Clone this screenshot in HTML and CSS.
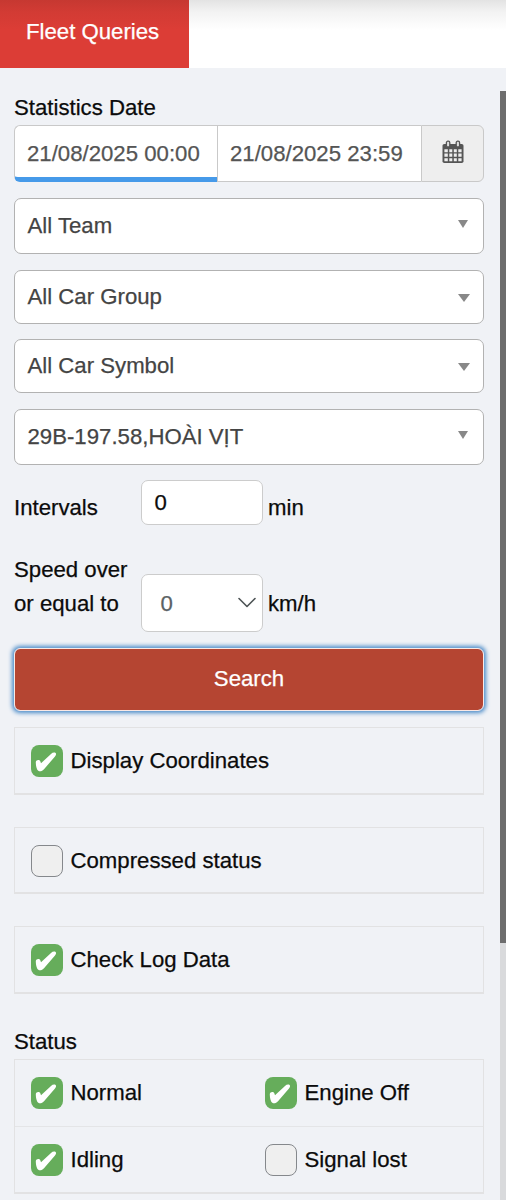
FILE: index.html
```
<!DOCTYPE html>
<html lang="en">
<head>
    <title>Fleet Queries</title>
    <meta charset="utf-8">
    <link rel="stylesheet" href="styles.css">
</head>
<body>

    <!-- Shared icons -->
    <svg class="icon-defs" width="0" height="0">
        <symbol id="check" viewBox="0 0 32 32">
            <path d="M4.8 17C5 14.6 8.6 14.2 9.3 16.3L10 18.3L20 9C21.5 7.6 23.5 7.2 24.6 8.1C25.5 9 25 10.3 24 11.5L13.2 24C10.8 26.8 7.5 27.2 6.2 24.6C5.2 22.4 4.8 19.5 4.8 17Z" />
        </symbol>
    </svg>

    <header class="tabs">
        <div class="tab">Fleet Queries</div>
    </header>

    <div class="panel">
        <main class="form">
            <div class="label">Statistics Date</div>
            <div class="dates">
                <div class="date active">21/08/2025 00:00</div>
                <div class="date">21/08/2025 23:59</div>
                <div class="date-icon">
                    <svg width="22" height="24" viewBox="0 0 22 24">
                        <rect x="0.5" y="4" width="21" height="19" rx="1.8" fill="#555" />
                        <path d="M2.4 9.2h3.4v3.1H2.4zM7.3 9.2h3v3.1h-3zM11.8 9.2h3v3.1h-3zM16.3 9.2h3.3v3.1h-3.3zM2.4 13.6h3.4v3.2H2.4zM7.3 13.6h3v3.2h-3zM11.8 13.6h3v3.2h-3zM16.3 13.6h3.3v3.2h-3.3zM2.4 18.2h3.4v3H2.4zM7.3 18.2h3v3h-3zM11.8 18.2h3v3h-3zM16.3 18.2h3.3v3h-3.3z" fill="#eee" />
                        <rect x="4.4" y="1.2" width="3.4" height="5.8" rx="1.5" fill="#ddd" stroke="#555" stroke-width="1.3" />
                        <rect x="14.2" y="1.2" width="3.4" height="5.8" rx="1.5" fill="#ddd" stroke="#555" stroke-width="1.3" />
                    </svg>
                </div>
            </div>

            <div class="select tall">
                All Team
                <svg class="arrow" width="10" height="8"><path d="M0 0h10L5 8z" /></svg>
            </div>
            <div class="select">
                All Car Group
                <svg class="arrow wide" width="12" height="8"><path d="M0 0h12L6 8z" /></svg>
            </div>
            <div class="select">
                All Car Symbol
                <svg class="arrow wide" width="12" height="8"><path d="M0 0h12L6 8z" /></svg>
            </div>
            <div class="select tall">
                29B-197.58,HOÀI VỊT
                <svg class="arrow" width="10" height="8"><path d="M0 0h10L5 8z" /></svg>
            </div>

            <div class="row intervals">
                <div class="row-label">Intervals</div>
                <div class="input">0</div>
                <div class="unit">min</div>
            </div>
            <div class="row speed">
                <div class="row-label">Speed over<br>or equal to</div>
                <div class="input dropdown">
                    0
                    <svg width="18" height="12" viewBox="0 0 18 12"><path d="M1 1.5l8 8 8-8" fill="none" stroke="#4c5254" stroke-width="1.6" stroke-linecap="round" stroke-linejoin="round" /></svg>
                </div>
                <div class="unit">km/h</div>
            </div>

            <button class="search">Search</button>

            <div class="box">
                <label class="option"><span class="checkbox checked"><svg><use href="#check" /></svg></span>Display Coordinates</label>
            </div>
            <div class="box">
                <label class="option"><span class="checkbox"></span>Compressed status</label>
            </div>
            <div class="box">
                <label class="option"><span class="checkbox checked"><svg><use href="#check" /></svg></span>Check Log Data</label>
            </div>

            <div class="label status-label">Status</div>
            <div class="status">
                <label class="option"><span class="checkbox checked"><svg><use href="#check" /></svg></span>Normal</label>
                <label class="option"><span class="checkbox checked"><svg><use href="#check" /></svg></span>Engine Off</label>
                <label class="option"><span class="checkbox checked"><svg><use href="#check" /></svg></span>Idling</label>
                <label class="option"><span class="checkbox"></span>Signal lost</label>
            </div>
        </main>
        <div class="scrollbar">
            <div class="thumb"></div>
        </div>
    </div>

</body>
</html>
```

FILE: styles.css
```
* {
    box-sizing: border-box;
}
body {
    margin: 0;
    height: 1200px;
    overflow: hidden;
    background: #f0f2f6;
    color: #0b0b0b;
    font-family: "Liberation Sans", Arial, sans-serif;
    font-size: 22.2px;
    line-height: 26px;
    -webkit-text-stroke: 0.25px;
}
.icon-defs {
    display: block;
}

/* Top tabs */
.tabs {
    display: flex;
    height: 67.5px;
    background: linear-gradient(#e3e3e3, #f3f3f3 12px, #fff 30px);
}
.tab {
    width: 188.5px;
    padding: 19px 0 0 26px;
    background: linear-gradient(#c63831, #d23b34 12px, #dc3d36 30px);
    color: #fff;
}

/* Panel and scrollbar */
.panel {
    display: flex;
    height: 1132.5px;
}
.form {
    width: 500px;
    padding: 27px 16px 0 14px;
}
.scrollbar {
    width: 6px;
    margin-top: 23.5px;
    background: #d9dadc;
}
.thumb {
    height: 852px;
    background: #6d6d6d;
}
.label {
    height: 30.5px;
}

/* Date range */
.dates {
    display: flex;
    width: 470px;
    height: 57px;
    margin-bottom: 16px;
}
.date {
    width: 204px;
    padding: 15px 0 0 13px;
    border: 1px solid #c9c9c9;
    border-width: 1px 0;
    background: #fff;
    color: #555;
}
.date.active {
    width: 203px;
    padding-left: 12px;
    border-left-width: 1px;
    border-bottom: 5px solid #469ae9;
    border-radius: 6px 0 0 6px;
}
.date + .date {
    padding-left: 12px;
    border-left-width: 1px;
}
.date-icon {
    flex: 1;
    padding: 14px 0 0 20px;
    border: 1px solid #c9c9c9;
    border-radius: 0 6px 6px 0;
    background: #eee;
}

/* Select boxes */
.select {
    display: flex;
    justify-content: space-between;
    width: 470px;
    height: 54px;
    margin-bottom: 15.5px;
    padding: 13px 13px 0 12.5px;
    border: 1px solid #b2b2b2;
    border-radius: 7px;
    background: #fff;
    color: #444;
}
.select.tall {
    height: 56px;
    padding: 14px 15px 0 12.5px;
}
.arrow {
    margin-top: 7px;
    fill: #888;
}
.arrow.wide {
    margin-top: 10px;
}

/* Small inputs */
.row {
    display: flex;
}
.row-label {
    width: 127px;
}
.input {
    width: 122px;
    height: 45px;
    padding: 9px 12.5px;
    border: 1px solid #ccc;
    border-radius: 7px;
    background: #fff;
}
.unit {
    padding-left: 5px;
}
.intervals .row-label,
.intervals .unit {
    padding-top: 15px;
}
.speed {
    height: 107px;
    padding-top: 28px;
}
.speed .row-label {
    line-height: 34px;
}
.speed .unit {
    padding-top: 38px;
}
.dropdown {
    display: flex;
    justify-content: space-between;
    height: 58px;
    margin-top: 21px;
    padding: 16px 6px 0 18.5px;
    color: #5b6265;
}
.dropdown svg {
    margin-top: 6px;
}

.search {
    display: block;
    width: 470px;
    height: 63px;
    margin: 16px 0;
    padding: 0 0 2px;
    border: 1px solid #f9e9e6;
    border-radius: 6px;
    box-shadow: 0 0 4px 2px #4a8bc8;
    background: #b54532;
    background-clip: padding-box;
    color: #fff;
    font: inherit;
}

/* Checkbox groups */
.box {
    width: 470px;
    height: 67.5px;
    margin-bottom: 32px;
    border: 1px solid #e2e2e3;
    border-bottom-width: 2px;
}
.option {
    display: flex;
    height: 67px;
    padding: 17px 0 0 16px;
    line-height: 31px;
}
.checkbox {
    width: 32px;
    height: 32px;
    margin-right: 7.5px;
    border: 1px solid #85888c;
    border-radius: 8px;
    background: #efefef;
}
.checkbox.checked {
    border: none;
    background: #66ad5b;
}
.checkbox svg {
    display: block;
    width: 32px;
    height: 32px;
    fill: #fff;
}
.status-label {
    margin-top: 35.5px;
    height: 30px;
}
.status {
    display: grid;
    grid-template-columns: 234px 1fr;
    width: 470px;
    height: 135px;
    border: 1px solid #e2e2e3;
    border-bottom-width: 2px;
}
.status .option:nth-child(-n+2) {
    border-bottom: 1px solid #e4e5e7;
}
```
